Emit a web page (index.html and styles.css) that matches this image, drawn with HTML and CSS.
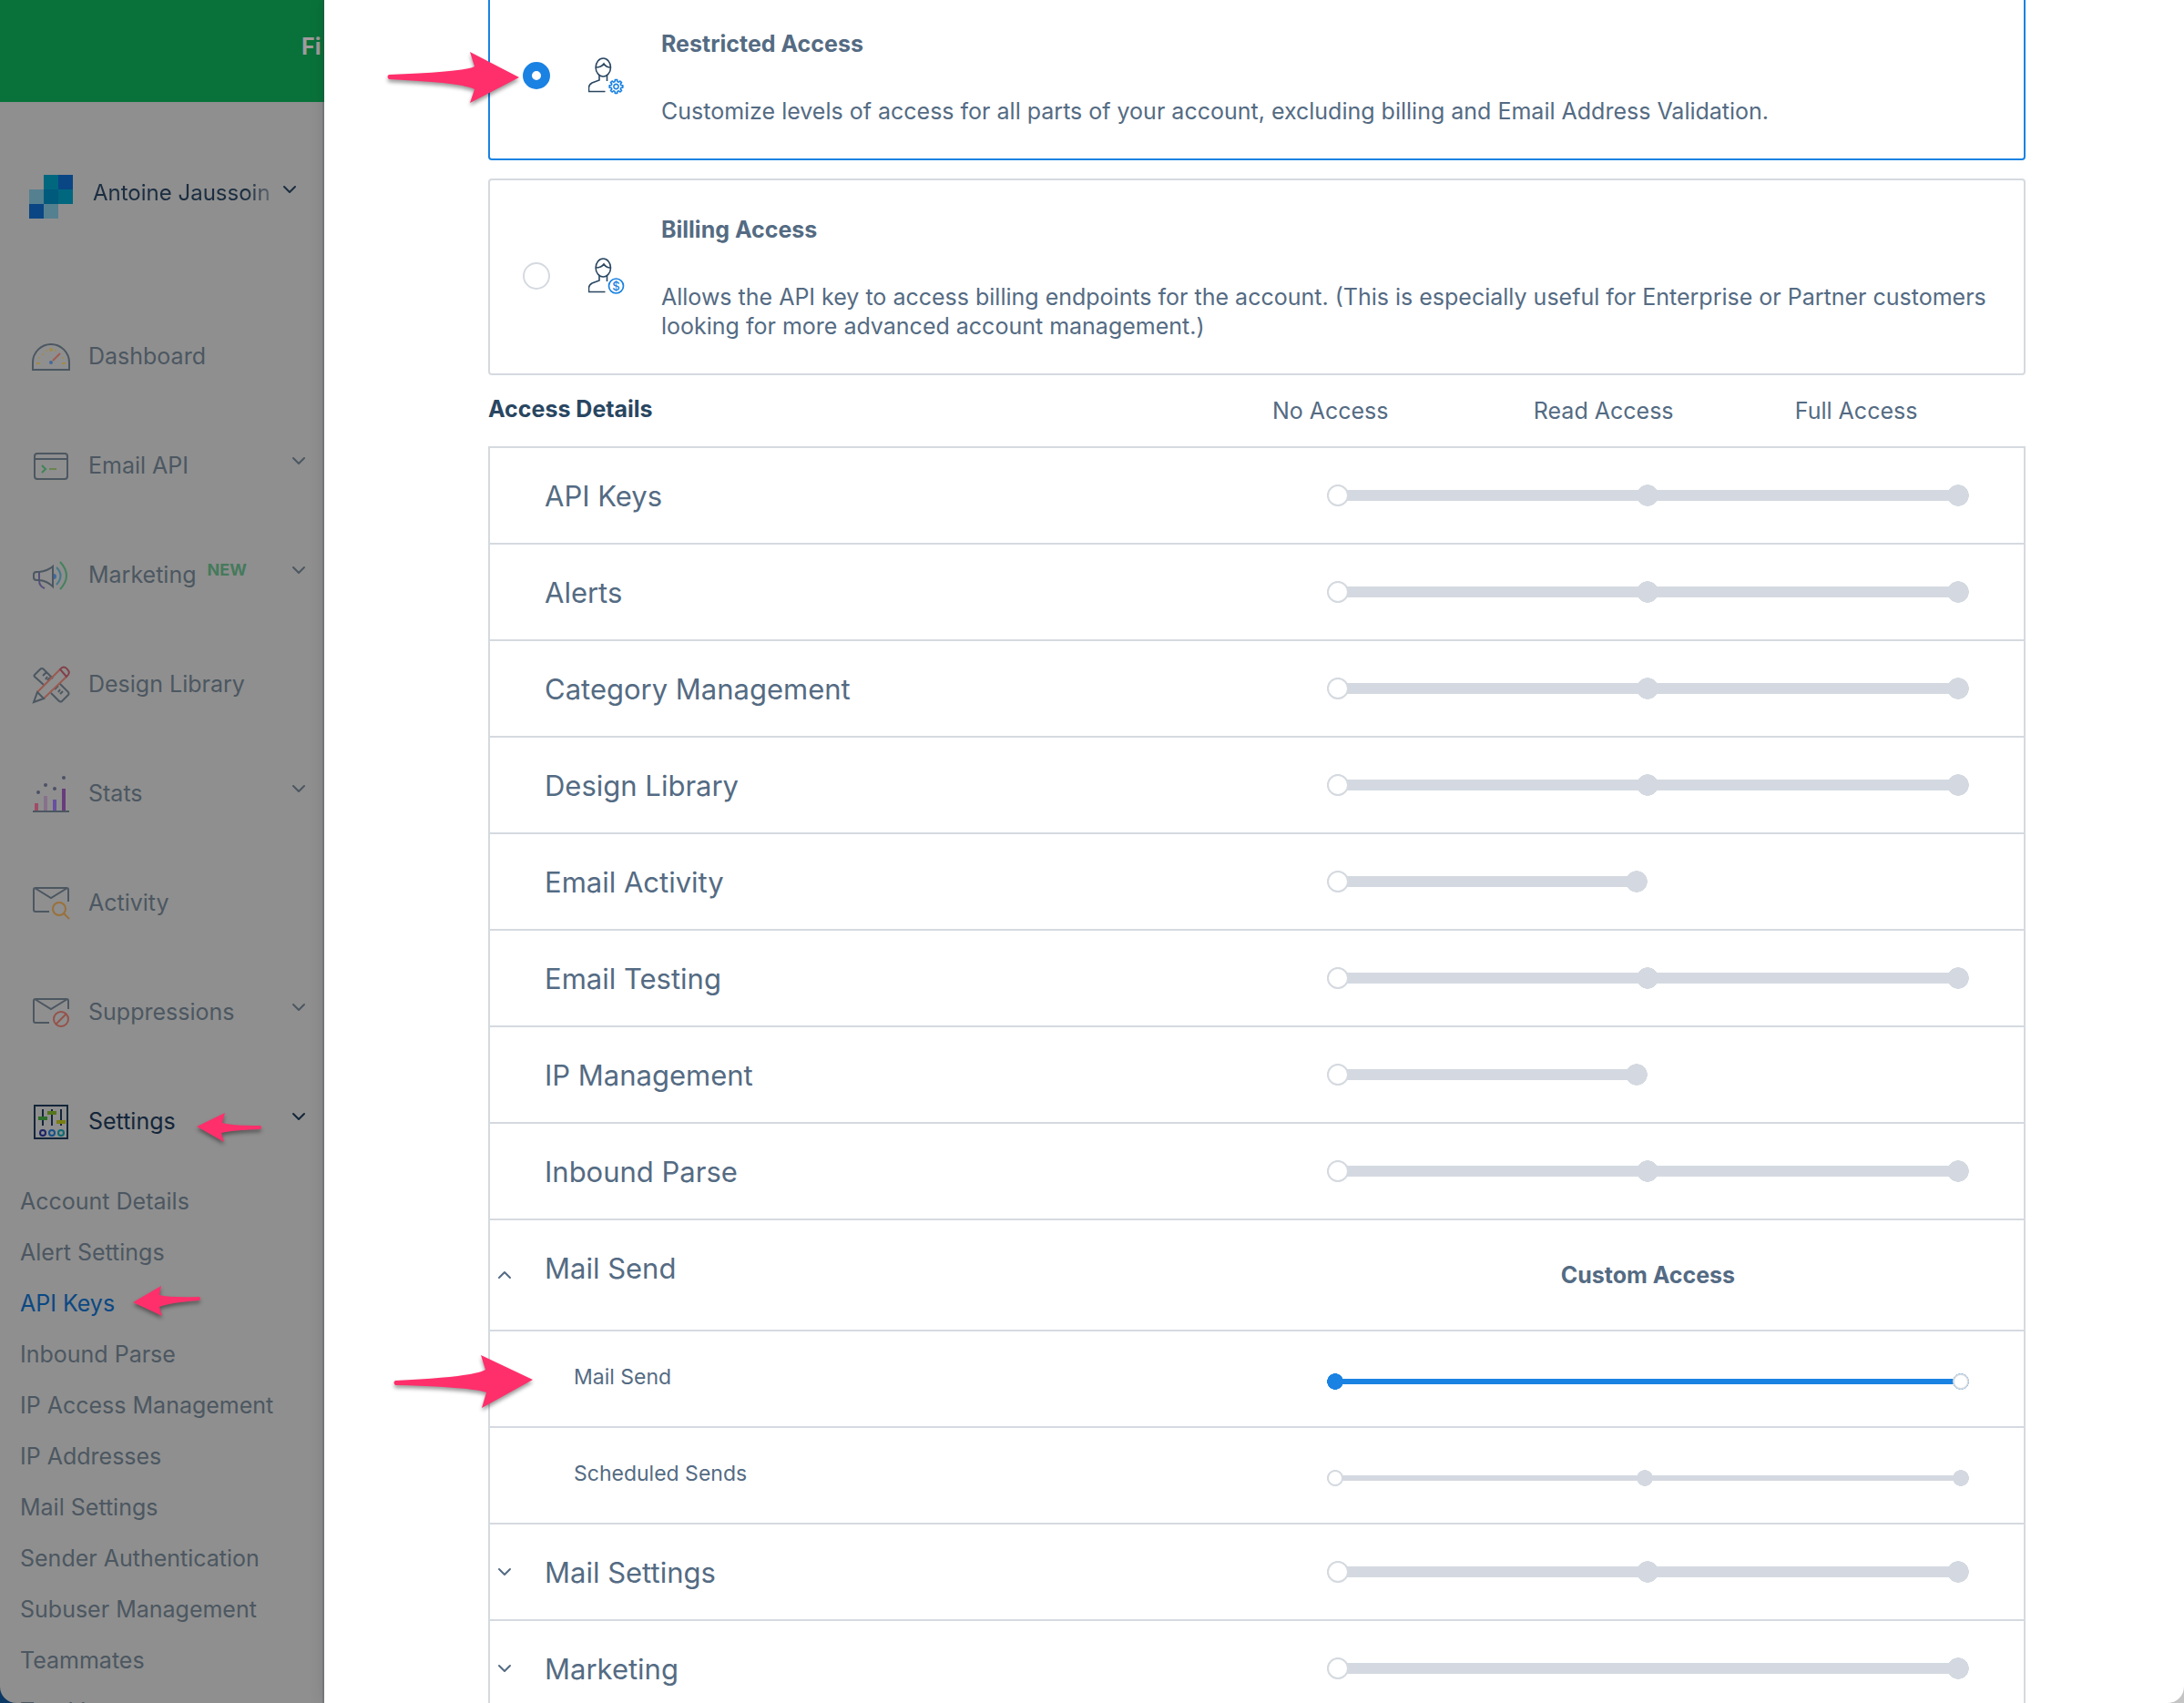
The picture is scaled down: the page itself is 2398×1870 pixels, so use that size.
FILE: index.html
```html
<!DOCTYPE html>
<html lang="en">
<head>
<meta charset="utf-8">
<title>API Keys</title>
<link rel="stylesheet" href="styles.css">
</head>
<body>
<svg class="sprite" aria-hidden="true">
  <symbol id="chevron" viewBox="0 0 16 10"><path d="M2 2l6 6 6-6" fill="none" stroke="currentColor" stroke-width="2" stroke-linecap="round" stroke-linejoin="round"/></symbol>
  <symbol id="person" viewBox="0 0 40 40"><g fill="none" stroke="#294661" stroke-width="1.6"><ellipse cx="16.3" cy="11" rx="8.2" ry="10"/><path d="M8 11c4 0 7-1 9-4 2 3 4 4 7 4"/><path d="M12 20v5L4 28q-3.5 2-3.5 5v4.500h18M20.500 20v6"/></g></symbol>
</svg>
<div class="app">
  <aside class="sidebar">
    <div class="banner">Fi</div>
    <button class="account" type="button">
      <svg class="account-logo" viewBox="0 0 48 48">
        <path fill="#00677f" d="M16 0h16v16H16zM32 16h16v16H32z"/>
        <path fill="#0a4684" d="M32 0h16v16H32zM0 32h16v16H0z"/>
        <path fill="#55808f" d="M0 16h16v16H0zM16 32h16v16H16z"/>
        <path fill="#005a7c" d="M16 16h16v16H16z"/>
      </svg>
      <span class="account-name">Antoine Jaussoin</span>
      <svg class="chevron"><use href="#chevron"/></svg>
    </button>
    <nav class="nav">
      <a class="nav-item" href="#">
        <svg class="nav-icon" viewBox="0 0 40 40"><path class="line" d="M0 34v-8a20 20 0 0 1 40 0v8z"/><g fill="#a08a4a"><circle cx="20" cy="12" r="2"/><circle cx="15" cy="13" r="1"/><circle cx="25" cy="13" r="1"/><circle cx="11" cy="17" r="1"/><circle cx="7" cy="21" r="1"/><circle cx="33" cy="21" r="1"/><path d="M4 26h4v2H4zM32 26h4v2h-4z"/></g><path d="M22 24l8-8" stroke="#a05c50" stroke-width="2"/><circle cx="20" cy="26" r="2" fill="#45699a"/></svg>
        <span>Dashboard</span>
      </a>
      <a class="nav-item" href="#">
        <svg class="nav-icon" viewBox="0 0 40 40"><rect class="line" x="2" y="6" width="36" height="28" rx="3"/><path class="line" d="M2 12h36"/><path d="M10 19l4 4-4 4" fill="none" stroke="#3f8558" stroke-width="2"/><path d="M18 23h8" stroke="#6a8450" stroke-width="2"/></svg>
        <span>Email API</span>
        <svg class="chevron"><use href="#chevron"/></svg>
      </a>
      <a class="nav-item" href="#">
        <svg class="nav-icon" viewBox="0 0 40 40"><path d="M7 16v9q0 7 6 9" fill="none" stroke="#54507c" stroke-width="2"/><path class="line" d="M22 10v22q-6-6-15-7H4q-3 0-3-3v-3q0-3 3-3h3q9-1 15-6z"/><path d="M23 18a3 3 0 0 1 0 6z" fill="#3f6aa0"/><path d="M26 11q9 9 0 19" fill="none" stroke="#44788a" stroke-width="2"/><path d="M30 5q14 15 0 30" fill="none" stroke="#44825c" stroke-width="2"/></svg>
        <span>Marketing</span><span class="tag">NEW</span>
        <svg class="chevron"><use href="#chevron"/></svg>
      </a>
      <a class="nav-item" href="#">
        <svg class="nav-icon" viewBox="0 0 40 40"><path class="line" d="M12 20L2 11q-1-1 0-2l6-6q2-2 4 0l10 10M11 10l4-4M14 14l2-3M16 15l3-3M20 29l9 9q1 1 3 0l7-7q1-1 0-3l-10-10M24 25l4-4M28 28l2-3M30 30l3-3"/><path d="M5 28L30 3M12 35l25-24" stroke="#9a5a50" stroke-width="2"/><path d="M30 3q4-5 8 0 4 4-1 8z" fill="none" stroke="#82404a" stroke-width="2"/><path class="line" d="M5 28l7 7-11 4z"/></svg>
        <span>Design Library</span>
      </a>
      <a class="nav-item" href="#">
        <svg class="nav-icon" viewBox="0 0 40 40"><path d="M2 30h4v8H2z" fill="#a04c68"/><path d="M12 22h4v16h-4z" fill="#87708c"/><path d="M22 26h4v12h-4z" fill="#6650a0"/><path d="M32 14h4v24h-4z" fill="#683c7c"/><path class="line" d="M0 39h40"/><g fill="#4d5166"><circle cx="6" cy="18" r="2"/><circle cx="14" cy="10" r="2"/><circle cx="24" cy="14" r="2"/><circle cx="34" cy="2" r="2"/></g></svg>
        <span>Stats</span>
        <svg class="chevron"><use href="#chevron"/></svg>
      </a>
      <a class="nav-item" href="#">
        <svg class="nav-icon" viewBox="0 0 40 40"><path class="line" d="M39 18V5q0-2-2-2H3Q1 3 1 5v22q0 2 2 2h15M2 3l18 11L38 3"/><g fill="none" stroke="#9a713a" stroke-width="2"><circle cx="29" cy="26" r="7"/><path d="M34 31l6 6"/></g></svg>
        <span>Activity</span>
      </a>
      <a class="nav-item" href="#">
        <svg class="nav-icon" viewBox="0 0 40 40"><path class="line" d="M39 16V7q0-2-2-2H3Q1 5 1 7v22q0 2 2 2h15M2 5l18 11L38 5"/><g fill="none" stroke="#95524a" stroke-width="2"><circle cx="31" cy="27" r="8"/><path d="M25 33l12-12"/></g></svg>
        <span>Suppressions</span>
        <svg class="chevron"><use href="#chevron"/></svg>
      </a>
      <a class="nav-item nav-item-active" href="#">
        <svg class="nav-icon" viewBox="0 0 40 40"><path class="line" d="M2 2h36v36H2zM11 6v18M21 6v18M31 6v18"/><path d="M6 14h10v4H6z" fill="#2c6e2a"/><path d="M16 8h10v4H16z" fill="#55761c"/><path d="M26 18h10v4H26z" fill="#7a7e12"/><g fill="none" stroke-width="2"><circle cx="11" cy="32" r="3" stroke="#1c2368"/><circle cx="21" cy="32" r="3" stroke="#165088"/><circle cx="31" cy="32" r="3" stroke="#0c6a74"/></g></svg>
        <span>Settings</span>
        <svg class="chevron"><use href="#chevron"/></svg>
        <svg class="arrow arrow-settings" viewBox="0 0 72 32"><path d="M0 15L31 0L28 11Q38 14 70 14Q72 16 70 18Q38 19 27 22L30 32Z"/></svg>
      </a>
      <ul class="subnav">
        <li><a href="#">Account Details</a></li>
        <li><a href="#">Alert Settings</a></li>
        <li><a class="current" href="#">API Keys<svg class="arrow arrow-keys" viewBox="0 0 74 33"><path d="M0 18L31 0L29 10Q40 13 73 12Q75 14 73 16Q42 18 29 23L32 33Z"/></svg></a></li>
        <li><a href="#">Inbound Parse</a></li>
        <li><a href="#">IP Access Management</a></li>
        <li><a href="#">IP Addresses</a></li>
        <li><a href="#">Mail Settings</a></li>
        <li><a href="#">Sender Authentication</a></li>
        <li><a href="#">Subuser Management</a></li>
        <li><a href="#">Teammates</a></li>
        <li><a href="#">Tracking</a></li>
      </ul>
    </nav>
  </aside>

  <main class="panel">
    <label class="option option-checked">
      <input class="radio" type="radio" name="access" checked>
      <svg class="option-icon" viewBox="0 0 40 40"><use href="#person"/><g transform="translate(30.500 32) scale(.93)" fill="#fff" stroke="#1a82e2" stroke-width="1.700" stroke-linejoin="round"><path d="M-1.5-5.8L-1.3-7.9H1.3L1.5-5.8L3.1-5.1L4.7-6.5L6.5-4.7L5.1-3.1L5.8-1.5L7.9-1.3V1.3L5.8 1.5L5.1 3.1L6.5 4.7L4.7 6.5L3.1 5.1L1.5 5.8L1.3 7.9H-1.3L-1.5 5.8L-3.1 5.1L-4.7 6.5L-6.5 4.7L-5.1 3.1L-5.8 1.5L-7.9 1.3V-1.3L-5.8-1.5L-5.1-3.1L-6.5-4.7L-4.7-6.5L-3.1-5.1Z"/><circle r="2.800"/></g></svg>
      <span class="option-text">
        <strong>Restricted Access</strong>
        <span>Customize levels of access for all parts of your account, excluding billing and Email Address Validation.</span>
      </span>
      <svg class="arrow arrow-option" viewBox="0 0 146 56"><path d="M145 28L91 0L96 16Q85 22 2 25Q-1 27 2 30Q85 34 96 41L91 56Z"/></svg>
    </label>
    <label class="option">
      <input class="radio" type="radio" name="access">
      <svg class="option-icon" viewBox="0 0 40 40"><use href="#person"/><circle cx="30.5" cy="31" r="8" fill="#fff" stroke="#1a82e2" stroke-width="1.700"/><text class="coin" x="30.5" y="36" text-anchor="middle">$</text></svg>
      <span class="option-text">
        <strong>Billing Access</strong>
        <span>Allows the API key to access billing endpoints for the account. (This is especially useful for Enterprise or Partner customers looking for more advanced account management.)</span>
      </span>
    </label>

    <header class="details-head">
      <h2>Access Details</h2>
      <span>No Access</span>
      <span>Read Access</span>
      <span>Full Access</span>
    </header>

    <section class="details">
      <div class="row"><label class="name" for="s1">API Keys</label><div class="control"><input class="slider" id="s1" type="range" min="0" max="2" value="0"></div></div>
      <div class="row"><label class="name" for="s2">Alerts</label><div class="control"><input class="slider" id="s2" type="range" min="0" max="2" value="0"></div></div>
      <div class="row"><label class="name" for="s3">Category Management</label><div class="control"><input class="slider" id="s3" type="range" min="0" max="2" value="0"></div></div>
      <div class="row"><label class="name" for="s4">Design Library</label><div class="control"><input class="slider" id="s4" type="range" min="0" max="2" value="0"></div></div>
      <div class="row"><label class="name" for="s5">Email Activity</label><div class="control"><input class="slider slider-two slider-half" id="s5" type="range" min="0" max="1" value="0"></div></div>
      <div class="row"><label class="name" for="s6">Email Testing</label><div class="control"><input class="slider" id="s6" type="range" min="0" max="2" value="0"></div></div>
      <div class="row"><label class="name" for="s7">IP Management</label><div class="control"><input class="slider slider-two slider-half" id="s7" type="range" min="0" max="1" value="0"></div></div>
      <div class="row"><label class="name" for="s8">Inbound Parse</label><div class="control"><input class="slider" id="s8" type="range" min="0" max="2" value="0"></div></div>
      <div class="row row-open">
        <button class="toggle" type="button" aria-label="Collapse Mail Send" aria-expanded="true"><svg class="chevron chevron-up"><use href="#chevron"/></svg></button>
        <span class="name">Mail Send</span>
        <div class="control"><strong class="custom">Custom Access</strong></div>
      </div>
      <div class="row row-sub">
        <label class="name" for="s9">Mail Send</label>
        <div class="control"><input class="slider slider-two slider-small slider-on" id="s9" type="range" min="0" max="1" value="1"></div>
        <svg class="arrow arrow-row" viewBox="0 0 154 58"><path d="M153 27L96 0L101 16Q88 24 2 28Q-1 30 2 33Q85 35 102 41L97 58Z"/></svg>
      </div>
      <div class="row row-sub"><label class="name" for="s10">Scheduled Sends</label><div class="control"><input class="slider slider-small" id="s10" type="range" min="0" max="2" value="0"></div></div>
      <div class="row">
        <button class="toggle" type="button" aria-label="Expand Mail Settings" aria-expanded="false"><svg class="chevron"><use href="#chevron"/></svg></button>
        <label class="name" for="s11">Mail Settings</label><div class="control"><input class="slider" id="s11" type="range" min="0" max="2" value="0"></div>
      </div>
      <div class="row">
        <button class="toggle" type="button" aria-label="Expand Marketing" aria-expanded="false"><svg class="chevron"><use href="#chevron"/></svg></button>
        <label class="name" for="s12">Marketing</label><div class="control"><input class="slider slider-two" id="s12" type="range" min="0" max="1" value="0"></div>
      </div>
    </section>
  </main>
</div>
</body>
</html>
```

FILE: styles.css
```css
* { box-sizing: border-box; }

:root {
  --text: #546b83;
  --heading: #294661;
  --line: #d5dae0;
  --track: #d4d9e1;
  --blue: #1a82e2;
  --pink: #ff2f6b;
  --muted: #4c5761;
}

html { background: linear-gradient(90deg, #0c3865 50%, #c4c4c4 50%); }

body {
  margin: 0;
  font-family: Inter, "Liberation Sans", sans-serif;
  font-size: 25px;
  line-height: 32px;
  color: var(--text);
}

button {
  padding: 0;
  border: 0;
  background: none;
  font: inherit;
  color: inherit;
  text-align: left;
}

a { color: inherit; text-decoration: none; }

.sprite { position: absolute; width: 0; height: 0; }

.app {
  display: flex;
  height: 100vh;
  overflow: hidden;
  border-radius: 0 0 18px 18px;
}

.chevron { width: 16px; height: 10px; flex: none; }
.chevron-up { transform: rotate(180deg); }

/* Sidebar */
.sidebar {
  width: 356px;
  flex: none;
  background: #8f8f8f;
  color: var(--muted);
}

.banner {
  height: 112px;
  padding: 35px 0 0 331px;
  overflow: hidden;
  background: #09723a;
  color: #a29a9c;
  font-weight: 700;
}

.account {
  display: flex;
  width: 100%;
  padding: 80px 0 91px 32px;
  color: #1b2d40;
  font-size: 24px;
  line-height: 40px;
}
.account-logo { width: 48px; height: 48px; margin-right: 22px; flex: none; }
.account-name {
  width: 200px;
  overflow: hidden;
  white-space: nowrap;
  -webkit-mask-image: linear-gradient(90deg, #000 84%, rgba(0, 0, 0, .3));
  mask-image: linear-gradient(90deg, #000 84%, rgba(0, 0, 0, .3));
}
.account .chevron { margin: 11px 0 0 8px; }

.nav-item {
  position: relative;
  display: flex;
  align-items: center;
  height: 120px;
  padding: 0 20px 0 36px;
}
.nav-item-active { color: #14263a; }
.nav-icon {
  width: 40px;
  height: 40px;
  margin: 2px 21px 0 0;
  flex: none;
  overflow: visible;
}
.nav-icon .line { fill: none; stroke: currentColor; stroke-width: 2; }
.nav-item .chevron { margin: 0 0 10px auto; }
.tag {
  margin: 0 0 10px 12px;
  color: #457a5c;
  font-size: 18px;
  font-weight: 700;
}

.subnav { margin: 0; padding: 0 0 0 22px; list-style: none; line-height: 56px; }
.subnav a { position: relative; display: inline-block; white-space: nowrap; }
.subnav .current { color: #0b4883; }

/* Panel */
.panel {
  flex: 1;
  min-width: 0;
  padding: 0 174px 0 180px;
  background: #fff;
  box-shadow: -2px 0 0 rgba(60, 70, 85, .25), 0 0 16px rgba(0, 0, 0, .14);
}

.option {
  position: relative;
  display: flex;
  align-items: center;
  margin-bottom: 20px;
  padding: 38px 36px;
  padding-bottom: 36px;
  border: 2px solid var(--line);
  border-radius: 4px;
}
.option-checked { margin-top: -8px; border-color: var(--blue); }
.radio {
  appearance: none;
  width: 30px;
  height: 30px;
  margin: 0 42px 4px 0;
  flex: none;
  border: 2px solid var(--line);
  border-radius: 50%;
  background: #fff;
}
.radio:checked { border: 10px solid var(--blue); }
.option-icon { width: 40px; height: 40px; margin: 0 40px 4px 0; flex: none; overflow: visible; }
.coin { fill: var(--blue); font-size: 13px; font-weight: 500; }
.option-text { display: flex; flex-direction: column; gap: 42px; }

.details-head {
  display: grid;
  grid-template-columns: 51% 17% 17% 15%;
  margin-top: -20px;
  padding: 21px 0;
  line-height: 36px;
}
.details-head h2 {
  margin: 0;
  color: var(--heading);
  font-size: 25px;
  line-height: 32px;
}

.details { border: solid var(--line); border-width: 0 2px; }
.row {
  position: relative;
  display: grid;
  grid-template-columns: 60px calc(51% - 60px) 49%;
  align-items: center;
  min-height: 106px;
  border-top: 2px solid var(--line);
}
.name {
  grid-column: 2;
  align-self: start;
  padding: 33px 0 31px;
  font-size: 31px;
  line-height: 40px;
}
.toggle { grid-column: 1; grid-row: 1; display: flex; padding-left: 8px; }
.control { grid-column: 3; display: flex; padding: 0 60px; }
.row-open { min-height: 122px; }
.custom { flex: 1; text-align: center; }
.row-sub .name { padding-left: 32px; font-size: 23px; line-height: 34px; }
.row-sub .control { padding-top: 6px; }

.slider {
  --dot: 12px;
  --bar: 12px;
  --mid: 50%;
  --fill: var(--track);
  --stop: radial-gradient(circle closest-side, var(--fill) 96%, transparent);
  appearance: none;
  width: 100%;
  height: calc(var(--dot) * 2);
  margin: 0;
  background:
    var(--stop) left / calc(var(--dot) * 2) 100% no-repeat,
    var(--stop) var(--mid) 0 / calc(var(--dot) * 2) 100% no-repeat,
    var(--stop) right / calc(var(--dot) * 2) 100% no-repeat,
    linear-gradient(var(--fill), var(--fill)) center / calc(100% - var(--dot) * 2) var(--bar) no-repeat;
}
.slider-two {
  background:
    var(--stop) left / calc(var(--dot) * 2) 100% no-repeat,
    var(--stop) right / calc(var(--dot) * 2) 100% no-repeat,
    linear-gradient(var(--fill), var(--fill)) center / calc(100% - var(--dot) * 2) var(--bar) no-repeat;
}
.slider-half { width: 50%; }
.slider-small { --dot: 9px; --bar: 6px; --mid: calc(50% - 3px); }
.slider-on { --fill: var(--blue); }
.slider::-webkit-slider-thumb {
  appearance: none;
  width: calc(var(--dot) * 2);
  height: calc(var(--dot) * 2);
  border: 2px solid var(--line);
  border-radius: 50%;
  background: #fff;
}

/* Callout arrows lie over the page */
.arrow {
  position: absolute;
  fill: var(--pink);
  overflow: visible;
  filter: drop-shadow(0 3px 2px rgba(0, 0, 0, .4));
}
.arrow-settings { left: 216px; top: 51px; width: 72px; height: 32px; }
.arrow-keys { left: 124px; top: 9px; width: 74px; height: 33px; }
.arrow-option { left: -113px; top: 63px; width: 146px; height: 56px; }
.arrow-row { left: -106px; top: 26px; width: 154px; height: 58px; }
```
